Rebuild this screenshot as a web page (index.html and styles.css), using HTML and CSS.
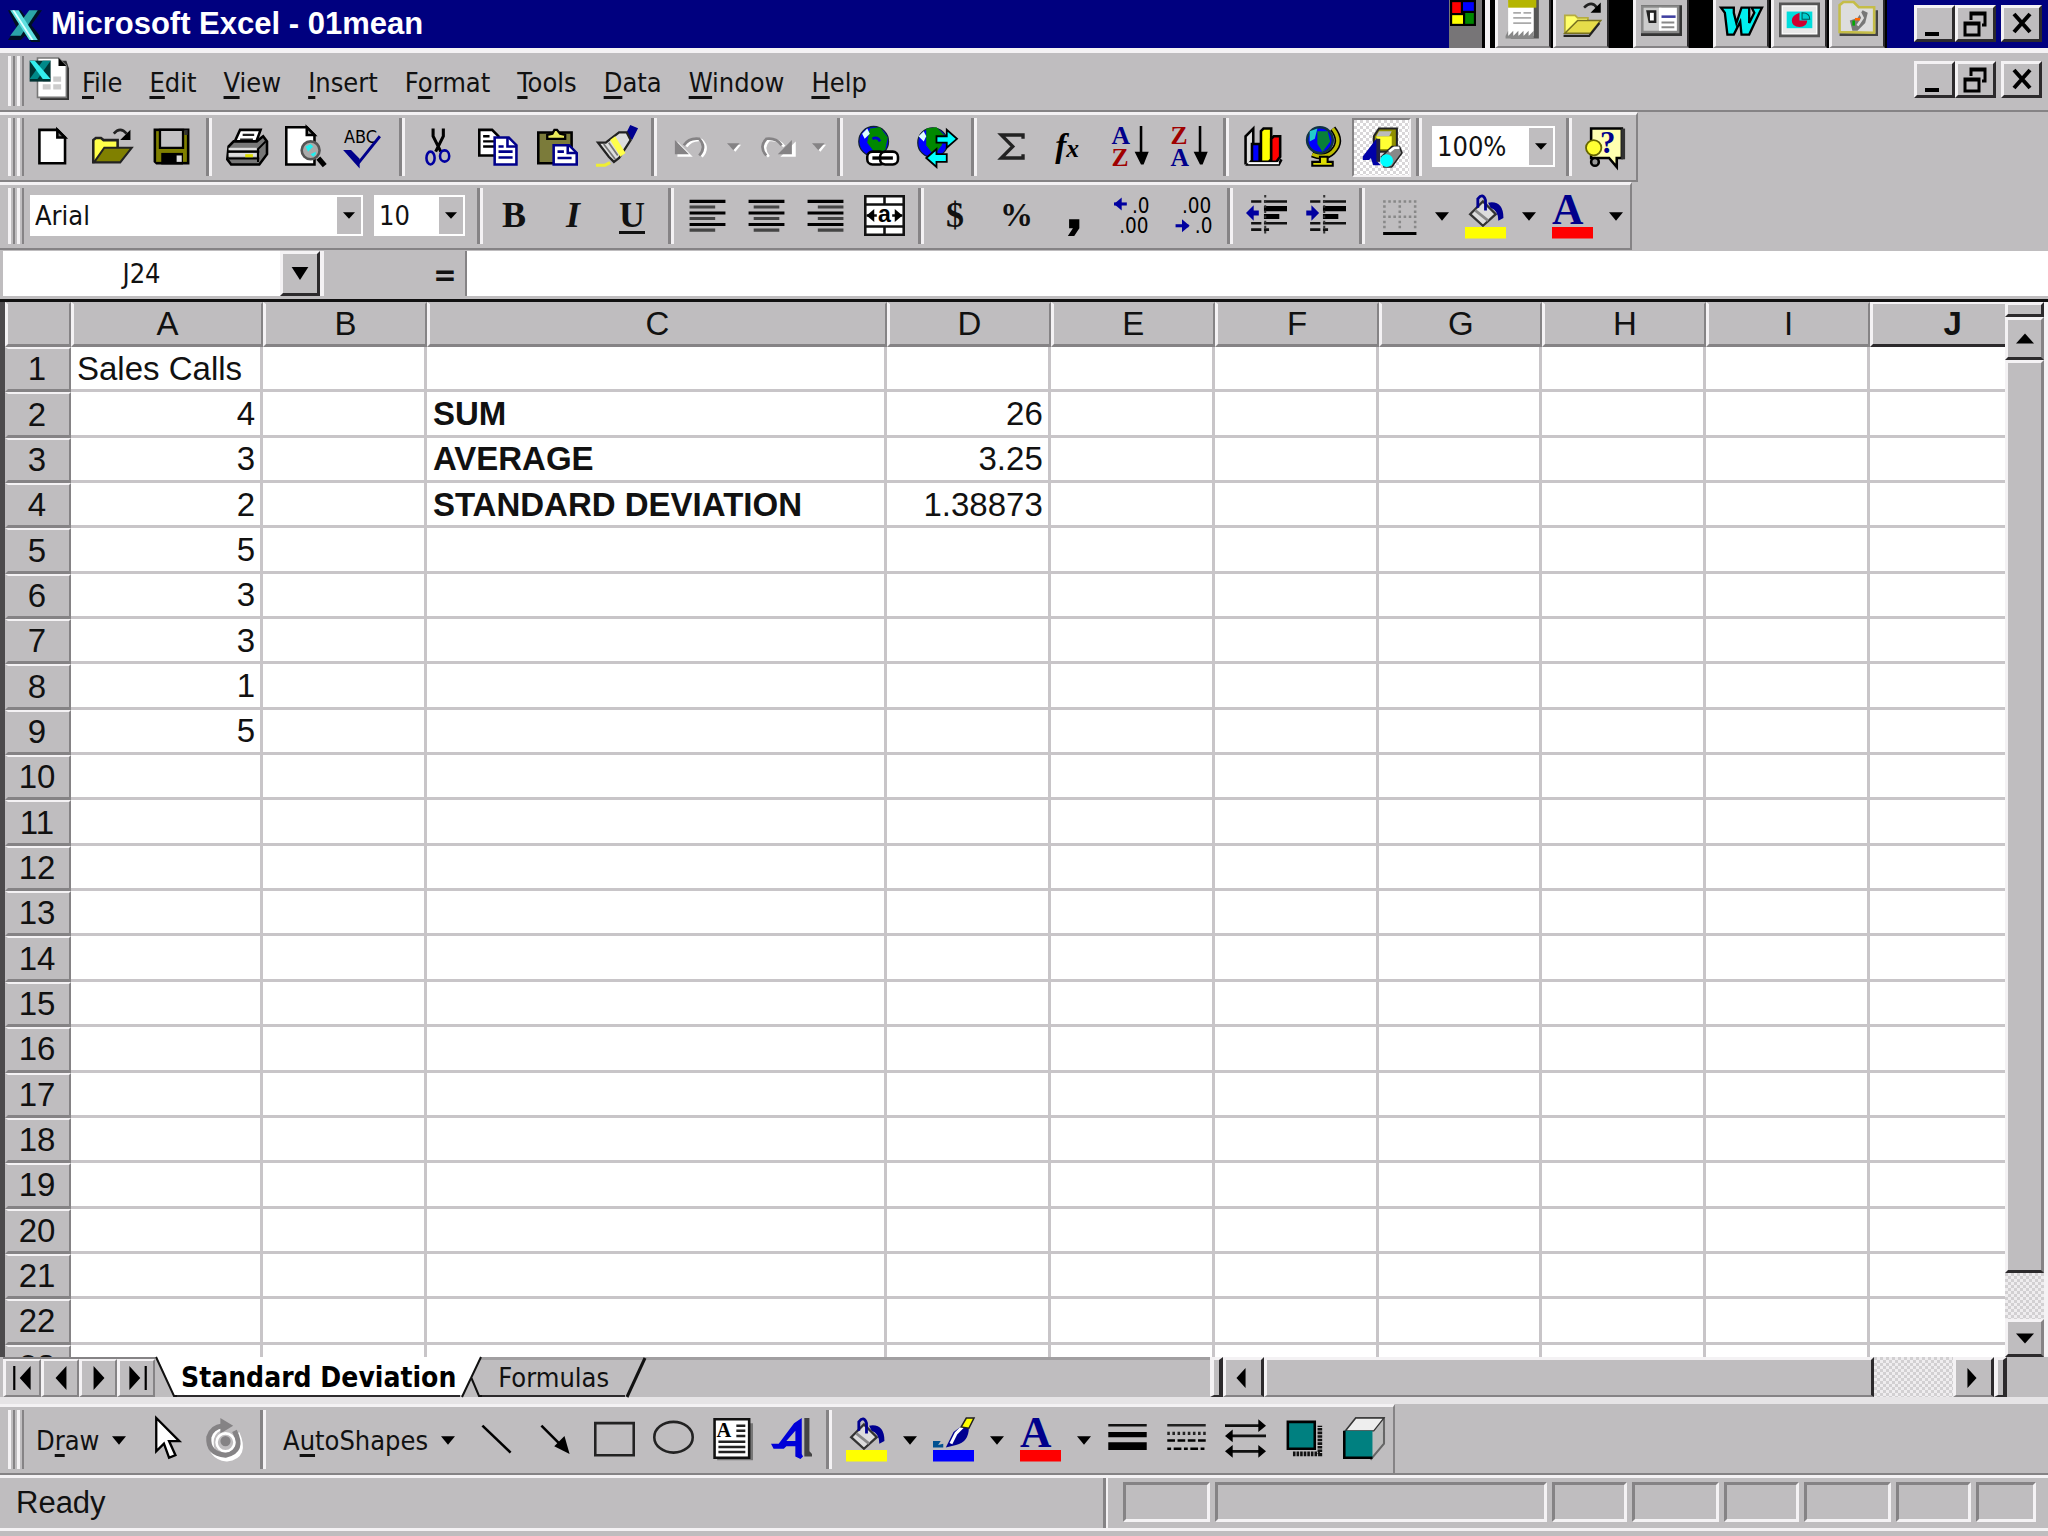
FILE: index.html
```html
<!DOCTYPE html>
<html lang="en">
    <head>
        <meta charset="utf-8">
        <title>Microsoft Excel - 01mean</title>
        <link rel="stylesheet" href="styles.css">
    </head>
    <body>
        <header class="titlebar">
            <svg class="app-icon" viewBox="0 0 16 16"><path d="M0 1h6l3 4 3-4h4l-5 7 4 5v3h-4l-3-3-2 2H0l4-6z" fill="#012"/><path d="M10 1h4L6 13H1z" fill="#2ba5a8"/><path d="M1 1h4l9 14h-4z" fill="#5fe0e0"/><path d="M2 1h1l9 14h-1z" fill="#e0ffff"/></svg>
            <h1 class="title">Microsoft Excel - 01mean</h1>
            <div class="shortcuts">
                <button class="flag" aria-label="Office"><svg viewBox="0 0 12 12"><path d="M0 0h12v12H0z"/><path d="M1 1h4v5H1z" fill="#f00"/><path d="M6 1h5v4H6z" fill="#00f"/><path d="M1 7h5v4H1z" fill="#ff0"/><path d="M7 6h4v5H7z" fill="#080"/></svg></button>
                <button class="shortcut" aria-label="New document"><svg class="icon" viewBox="0 0 16 16"><path d="M3 0h11v15H3z" fill="#555"/><path d="M2 1h10v13H2z" fill="#fff"/><path d="M2 0h11v3H2z" fill="#b5b500"/><path d="M4 5h3M8 5h3M4 7h7M4 9h7" stroke="#aaa" stroke-width=".7"/><path d="M1 14l1-2v2l2-2v2l2-2v2l2-2v2l2-2v2l2-2v3H1z" fill="#888"/></svg></button>
                <button class="shortcut" aria-label="Open document"><svg class="icon" viewBox="0 0 16 16"><path d="M1.500 13V6h4l1 1h4v3" fill="#ffff6b" stroke="#b5ac40" stroke-width=".7"/><path d="M1.500 13l5-5h9l-4 5z" fill="#e6dc4a" stroke="#777020" stroke-width=".6"/><path d="M1 14h10l4-5" fill="none" stroke="#222" stroke-width=".8"/><path d="M9 3q3-3 5 0" fill="none" stroke="#222"/><path d="M15.500 1v4h-4z"/></svg></button>
                <span class="gap"></span>
                <button class="shortcut" aria-label="Contact"><svg class="icon" viewBox="0 0 16 16"><path d="M0 2h16v12H0z" fill="#333"/><path d="M0 2h15v11H0z" fill="#888"/><path d="M1 3h7v9H1z" fill="#ccc"/><path d="M7 3h7v9H7z" fill="#fff"/><path d="M2 4h4v5H3z" fill="#222"/><path d="M3.500 5H5v3H3.500z" fill="#fff"/><path d="M8 6.500h5.500" stroke="#4040a0"/><path d="M8 8.800h5M8 10.600h5" stroke="#888" stroke-width=".8"/></svg></button>
                <span class="gap"></span>
                <button class="shortcut" aria-label="Word"><svg class="icon" viewBox="0 0 16 16"><path d="M0 3h5v2l1 4 2-6h3v6l2-4-1-2h4l-1 2-4 8.500H8l-.5-5-2.500 5H2.500L1.500 5z" fill="#0ee" stroke="#000" stroke-width=".9"/></svg></button>
                <button class="shortcut" aria-label="PowerPoint"><svg class="icon" viewBox="0 0 16 16"><path d="M.5 1.500h15v12.500H.5z" fill="#fff" stroke="#555"/><path d="M1.500 2.500h13v10.500h-13z" fill="#e8e8e8"/><path d="M3 4.500h10v6.500H3z" fill="#0dd"/><path d="M8 5v3h3q0 2.500-3 2.500T5 8q0-2 3-3" fill="#d00030"/><path d="M9 5q3 0 3 2.500H9z" fill="#0cc" stroke="#055" stroke-width=".4"/></svg></button>
                <button class="shortcut" aria-label="Explorer"><svg class="icon" viewBox="0 0 16 16"><path d="M1 13.500h14.500V4" fill="none" stroke="#444"/><path d="M1 12.500V2l1.500-1.200h4l2 2h6v10z" fill="#ddd" stroke="#c5bd48"/><path d="M10 4l2 1-1 4-3 3H6L5 8l3-1z" fill="#777"/><path d="M9 5l1 2-2 3" stroke="#ddd" fill="none"/><path d="M7 7h2v1H7z" fill="#f60"/><path d="M6 8h1v2H6z" fill="#0a0"/></svg></button>
            </div>
            <div class="window-buttons">
                <button class="win-btn" aria-label="Minimize"><svg viewBox="0 0 16 14"><path d="M3 11h7v2H3z"/></svg></button>
                <button class="win-btn" aria-label="Restore"><svg viewBox="0 0 16 14"><path d="M5.500 5V1.500h7v6H11M5 2h8M2.500 6.500h7v6h-7zM2 7h8" fill="none" stroke="#000" stroke-width="1.500"/></svg></button>
                <button class="win-btn close" aria-label="Close"><svg viewBox="0 0 16 14"><path d="M4 2l8 9M12 2l-8 9" stroke="#000" stroke-width="2"/></svg></button>
            </div>
        </header>

        <nav class="menubar">
            <span class="grip"></span>
            <svg class="doc-icon" viewBox="0 0 16 16"><path d="M5 1h10l1 3v12H5z" fill="#333"/><path d="M4 0h8l3 3v12H4z" fill="#fff" stroke="#777" stroke-width=".6"/><path d="M12 0v3h3z"/><path d="M6 7h3v2H6zM10 7h3v2h-3zM6 10h3v2H6zM10 10h3v2h-3z" fill="#ccc"/><path d="M1 1h8v8H1z" fill="#033"/><path d="M6 1h3L4 8H1z" fill="#088"/><path d="M1 1h2l6 7H6z" fill="#3ee"/></svg>
            <button class="menu"><u>F</u>ile</button>
            <button class="menu"><u>E</u>dit</button>
            <button class="menu"><u>V</u>iew</button>
            <button class="menu"><u>I</u>nsert</button>
            <button class="menu">F<u>o</u>rmat</button>
            <button class="menu"><u>T</u>ools</button>
            <button class="menu"><u>D</u>ata</button>
            <button class="menu"><u>W</u>indow</button>
            <button class="menu"><u>H</u>elp</button>
            <div class="window-buttons">
                <button class="win-btn" aria-label="Minimize workbook"><svg viewBox="0 0 16 14"><path d="M3 11h7v2H3z"/></svg></button>
                <button class="win-btn" aria-label="Restore workbook"><svg viewBox="0 0 16 14"><path d="M5.500 5V1.500h7v6H11M5 2h8M2.500 6.500h7v6h-7zM2 7h8" fill="none" stroke="#000" stroke-width="1.500"/></svg></button>
                <button class="win-btn close" aria-label="Close workbook"><svg viewBox="0 0 16 14"><path d="M4 2l8 9M12 2l-8 9" stroke="#000" stroke-width="2"/></svg></button>
            </div>
        </nav>

        <!-- Standard toolbar -->
        <div class="toolbar" role="toolbar" aria-label="Standard">
            <span class="grip"></span>
            <button class="tool" aria-label="New"><svg class="icon" viewBox="0 0 16 16"><path d="M2.500 1.500h7l3 3v10h-10z" fill="#fff" stroke="#000"/><path d="M9.500 1.500v3h3z" fill="#777" stroke="#000"/></svg></button>
            <button class="tool" aria-label="Open"><svg class="icon" viewBox="0 0 16 16"><path d="M.5 14.500V5.500l1-.8h2l1 .8h5.500v3" fill="#ffff4a" stroke="#222"/><path d="M.8 14.200l4-5.700h10.700l-4.500 5.700z" fill="#808000" stroke="#222" stroke-width=".8"/><path d="M8.500 3q2.500-3 5 0" fill="none" stroke="#222"/><path d="M15 1.500v4h-4z"/></svg></button>
            <button class="tool" aria-label="Save"><svg class="icon" viewBox="0 0 16 16"><path d="M1 1h14v14H2l-1-1z"/><path d="M2 2h12v12H2z" fill="#808000"/><path d="M3.500 1.500h9v7h-9z" fill="#c4c2c4" stroke="#000" stroke-width=".9"/><path d="M4 10.500h8.500V15H4z"/><path d="M10 11.500h2V14h-2z" fill="#ddd"/><path d="M13 1.500h1.300v2H13z" fill="#333"/></svg></button>
            <span class="sep"></span>
            <button class="tool" aria-label="Print"><svg class="icon" viewBox="0 0 16 16"><path d="M5.500 1.500h8L11.500 7H3z" fill="#fff" stroke="#000"/><path d="M6.500 3.500h4.500M5.500 5.300h5" stroke="#222" stroke-width=".9"/><path d="M1 8l2-2h9l2.500-2L16 6v5l-3 4H2L.5 13z" fill="#777" stroke="#000"/><path d="M1 8.500h11v1H1z" fill="#ddd"/><path d="M1 10.500h11v1.500H1z" fill="#ddd"/><path d="M1 10h12M1 12.700h12M12.500 14V9l3-3" stroke="#000" stroke-width=".8" fill="none"/><path d="M7.500 11h3v1.200h-3z" fill="#dd0"/></svg></button>
            <button class="tool" aria-label="Print Preview"><svg class="icon" viewBox="0 0 16 16"><path d="M.5.500h8l3 3v11.500H.5z" fill="#fff" stroke="#000"/><path d="M8.500.500v3h3z" fill="#999" stroke="#000"/><circle cx="10" cy="9.500" r="3.500" fill="#aaa" stroke="#555"/><path d="M8 8l2-1 1 1-2 2zM10 11l2-1v1l-1 1z" fill="#2ee"/><path d="M13 12.500l2.500 3" stroke="#000" stroke-width="2"/></svg></button>
            <button class="tool" aria-label="Spelling"><svg class="icon" viewBox="0 0 16 16"><text x="0" y="6.500" class="svg-mono">ABC</text><path d="M3 11l3 3L14 4" fill="none" stroke="#00008b" stroke-width="1.100"/><path d="M1 10h1.500L5.500 13v2z" fill="#00008b" stroke="#00008b" stroke-width="1.200"/></svg></button>
            <span class="sep"></span>
            <button class="tool" aria-label="Cut"><svg class="icon" viewBox="0 0 16 16"><path d="M5.500 1v3L8.500 10M9.500 1v3L6.500 10" fill="none" stroke="#000" stroke-width="1.200"/><ellipse cx="4.500" cy="12.500" rx="1.600" ry="2.500" fill="none" stroke="#0000a0"/><ellipse cx="10" cy="11.700" rx="1.800" ry="2.200" fill="none" stroke="#0000a0"/></svg></button>
            <button class="tool" aria-label="Copy"><svg class="icon" viewBox="0 0 16 16"><path d="M.5 1.500h5l2.500 2.500v7.500H.5z" fill="#fff" stroke="#000"/><path d="M2 4h2.500M2 6h4.500M2 8h4.500" stroke="#000" stroke-width=".9"/><path d="M6.500 4.500h5.500l3 3v7.500h-8.500z" fill="#fff" stroke="#00008b"/><path d="M11.500 4.500v3.500h3.500M8 8h2M8 10h5.500M8 12.300h5.500" fill="none" stroke="#00008b"/></svg></button>
            <button class="tool" aria-label="Paste"><svg class="icon" viewBox="0 0 16 16"><path d="M.5 2.500h13v12H.5z" fill="#7b7b3a" stroke="#000"/><path d="M4 5V3.500l2-.5.800-1.500h1L9 3l2 .5V5z" fill="#e8e85a" stroke="#000" stroke-width=".9"/><path d="M6.500 7.500h6l3 3v4.500h-9z" fill="#fff" stroke="#00008b"/><path d="M12 7.500v3h3.500M8 10h2.500M8 12.500h5.500" fill="none" stroke="#00008b"/></svg></button>
            <button class="tool" aria-label="Format Painter"><svg class="icon" viewBox="0 0 16 16"><path d="M11.500 4l2-4 2.500 1-2 4z" fill="#000090" stroke="#000090" stroke-width=".6"/><path d="M.8 6.500h3L9 2.500h3l1.500 3-4.500 7-2 1.500-2-2z" fill="#ddd" stroke="#222" stroke-width=".9"/><path d="M5.500 5.500l2-1.500 4 6.500-2 1.500z" fill="#ffff4a"/><path d="M3 7l4.500 6M5 6.500l3.500 5" stroke="#777" stroke-width=".7"/><path d="M0 15.300h3.500l2-1" fill="none" stroke="#ee3" stroke-width="1.200"/></svg></button>
            <span class="sep"></span>
            <button class="tool" aria-label="Undo" disabled><svg class="icon" viewBox="0 0 16 16"><g fill="none" stroke="#fff"><path d="M6 8q2-3 6-2.500 3 3 0 6.500"/><path d="M2.500 6v6h6z" fill="#fff" stroke="none"/></g><g fill="none" stroke="#858385"><path d="M5 7.500q2-3 6-2.500 3 3 0 6.500"/><path d="M1.500 5.500v5.500h5.500z" fill="#858385" stroke="none"/></g></svg></button>
            <button class="drop" aria-label="Undo list" disabled><svg viewBox="0 0 10 6"><path d="M1 1h9L6 6z" fill="#fff"/><path d="M0 0h9L4.500 5z" fill="#858385"/></svg></button>
            <button class="tool" aria-label="Redo" disabled><svg class="icon" viewBox="0 0 16 16"><g fill="none" stroke="#fff"><path d="M11 8q-2-3-6-2.500-3 3 0 6.500"/><path d="M15.500 6v6h-6z" fill="#fff" stroke="none"/></g><g fill="none" stroke="#858385"><path d="M10 7.500q-2-3-6-2.500-3 3 0 6.500"/><path d="M14 5.500v5.500H8.500z" fill="#858385" stroke="none"/></g></svg></button>
            <button class="drop" aria-label="Redo list" disabled><svg viewBox="0 0 10 6"><path d="M1 1h9L6 6z" fill="#fff"/><path d="M0 0h9L4.500 5z" fill="#858385"/></svg></button>
            <span class="sep"></span>
            <button class="tool" aria-label="Insert Hyperlink"><svg class="icon" viewBox="0 0 16 16"><circle cx="6.500" cy="6" r="5.800" fill="#00f" stroke="#123" stroke-width=".5"/><path d="M5 1l4-.500 3 4-1 5-4 1-3-4z" fill="#080"/><path d="M6 5q2-1 3 1" stroke="#00c" fill="none"/><path d="M2 3l2-2 1 2-2 2z" fill="#dff"/><rect x="4" y="10" width="7" height="5" rx="2" fill="#fff" stroke="#000"/><rect x="9" y="10" width="7" height="5" rx="2" fill="#fff" stroke="#000"/><path d="M6 12.500h8" stroke="#000" stroke-width="1.300"/></svg></button>
            <button class="tool" aria-label="Web Toolbar"><svg class="icon" viewBox="0 0 16 16"><circle cx="6.500" cy="6.500" r="5.800" fill="#00f" stroke="#123" stroke-width=".5"/><path d="M4 1l4-.500 3 3-1 4-3 4-3-4z" fill="#080"/><path d="M1 4l2-2 1 2-1 2z" fill="#dff"/><path d="M8 4h4V1.500L16 5l-4 3.500V6.500H8z" fill="#0ff" stroke="#000" stroke-width=".7"/><path d="M12 11H8V9l-4 3.500L8 16v-2h4z" fill="#0ff" stroke="#000" stroke-width=".7"/></svg></button>
            <span class="sep"></span>
            <button class="tool" aria-label="AutoSum"><svg class="icon" viewBox="0 0 16 16"><path d="M12.500 5V3.500H4L8.500 8 4 12.500h8.500V11" fill="none" stroke="#222" stroke-width="1.300"/></svg></button>
            <button class="tool" aria-label="Paste Function"><svg class="icon" viewBox="0 0 16 16"><text x="2" y="12" class="svg-serif" font-size="13" font-style="italic">f<tspan font-size="10">x</tspan></text></svg></button>
            <button class="tool" aria-label="Sort Ascending"><svg class="icon" viewBox="0 0 16 16"><text x="1" y="7" class="svg-serif" font-size="10" fill="#00008b">A</text><text x="1" y="15.500" class="svg-serif" font-size="10" fill="#a00000">Z</text><path d="M12.500 0v12" stroke="#000"/><path d="M10 10h5.500l-2 5h-1z"/></svg></button>
            <button class="tool" aria-label="Sort Descending"><svg class="icon" viewBox="0 0 16 16"><text x="1" y="7" class="svg-serif" font-size="10" fill="#a00000">Z</text><text x="1" y="15.500" class="svg-serif" font-size="10" fill="#00008b">A</text><path d="M12.500 0v12" stroke="#000"/><path d="M10 10h5.500l-2 5h-1z"/></svg></button>
            <span class="sep"></span>
            <button class="tool" aria-label="Chart Wizard"><svg class="icon" viewBox="0 0 16 16"><path d="M1 15V4l3-3v12l-2 2h12l1-2" fill="#ddd" stroke="#000"/><path d="M3.500 7h3v7h-3z" fill="#00f" stroke="#000"/><path d="M7 2l1-1h3v12l-1 1H7z" fill="#ff0" stroke="#000"/><path d="M11 5l1-1h2.500v8L13 14h-2z" fill="#f00" stroke="#000"/><path d="M2 14.500h12" stroke="#fff" stroke-width=".8"/></svg></button>
            <button class="tool" aria-label="Map"><svg class="icon" viewBox="0 0 16 16"><path d="M12 1q4 5 0 9-3 3-8 1" fill="none" stroke="#000" stroke-width="2.500"/><path d="M12 1q4 5 0 9-3 3-8 1" fill="none" stroke="#bb0" stroke-width="1.300"/><circle cx="7" cy="5.500" r="5" fill="#00f" stroke="#134"/><path d="M6 2l4 0 1 4-3 4-2-3z" fill="#088038"/><path d="M3 2l3-1-1 4-2 1z" fill="#2cc"/><path d="M7 12h3v2h2v1.500H4V14h3z" fill="#dd0" stroke="#000" stroke-width=".8"/></svg></button>
            <button class="tool pressed" aria-label="Drawing" aria-pressed="true"><svg class="icon" viewBox="0 0 16 16"><path d="M5 4l2-3h7v9H5z" fill="#8f8f00" stroke="#222" stroke-width=".8"/><path d="M6 4h6v5H6z" fill="#ff3"/><path d="M7 2h5l-1 2H6z" fill="#bbb"/><path d="M1 12l5-6.500V14l1 1H5l-1-3-1 1H1z" fill="#0000a8" stroke="#0000a8" stroke-width=".6"/><path d="M6 5h1.500v9H6z" fill="#224"/><path d="M8 12l4-4h3l1 2.500-4 5.500H9z" fill="#888" stroke="#222" stroke-width=".6"/><path d="M11 10l2-1.500h2" stroke="#fff" fill="none"/><circle cx="10" cy="13.500" r="2.500" fill="#0ff"/></svg></button>
            <span class="sep"></span>
            <label class="combo zoom"><select aria-label="Zoom"><option>100%</option></select><svg viewBox="0 0 9 5"><path d="M0 0h9L4.500 5z"/></svg></label>
            <span class="sep"></span>
            <button class="tool" aria-label="Office Assistant"><svg class="icon" viewBox="0 0 16 16"><path d="M2 1h12v11.500h-2V16l-3-3.500H2z" fill="#ffffb0" stroke="#000"/><path d="M14.500 1v12" stroke="#333" stroke-width="1.500"/><text x="5.500" y="10.500" class="svg-serif" font-size="12" fill="#00008b">?</text><circle cx="3" cy="8.500" r="3" fill="#ff3" stroke="#660" stroke-width=".7"/><circle cx="3.500" cy="14" r="1.500" fill="#999" stroke="#000"/></svg></button>
        </div>

        <!-- Formatting toolbar -->
        <div class="toolbar formatting" role="toolbar" aria-label="Formatting">
            <span class="grip"></span>
            <label class="combo font"><select aria-label="Font"><option>Arial</option></select><svg viewBox="0 0 9 5"><path d="M0 0h9L4.500 5z"/></svg></label>
            <label class="combo size"><select aria-label="Font Size"><option>10</option></select><svg viewBox="0 0 9 5"><path d="M0 0h9L4.500 5z"/></svg></label>
            <span class="sep"></span>
            <button class="tool letter">B</button>
            <button class="tool letter"><i>I</i></button>
            <button class="tool letter"><u>U</u></button>
            <span class="sep"></span>
            <button class="tool" aria-label="Align Left"><svg class="icon" viewBox="0 0 16 16"><path d="M1 2.500h14M1 7h14M1 11.500h14" stroke="#000" stroke-width="1.200"/><path d="M1 4.700h10M1 9.200h10M1 13.700h10" stroke="#444" stroke-width="1.200"/></svg></button>
            <button class="tool" aria-label="Center"><svg class="icon" viewBox="0 0 16 16"><path d="M1 2.500h14M1 7h14M1 11.500h14" stroke="#000" stroke-width="1.200"/><path d="M3 4.700h10M3 9.200h10M3 13.700h10" stroke="#444" stroke-width="1.200"/></svg></button>
            <button class="tool" aria-label="Align Right"><svg class="icon" viewBox="0 0 16 16"><path d="M1 2.500h14M1 7h14M1 11.500h14" stroke="#000" stroke-width="1.200"/><path d="M5 4.700h10M5 9.200h10M5 13.700h10" stroke="#444" stroke-width="1.200"/></svg></button>
            <button class="tool" aria-label="Merge and Center"><svg class="icon" viewBox="0 0 16 16"><path d="M.5.500h15v15H.5z" fill="#fff" stroke="#111"/><path d="M0 3.700h16M0 12.300h16M8 0v4M8 12v4M1 8h4M11 8h4" stroke="#111"/><path d="M1 8l3-2.500v5zM15 8l-3-2.500v5z"/><text x="5.500" y="10.500" class="svg-sans" font-size="9">a</text></svg></button>
            <span class="sep"></span>
            <button class="tool letter">$</button>
            <button class="tool letter percent">%</button>
            <button class="tool" aria-label="Comma Style"><svg class="icon" viewBox="0 0 16 16"><path d="M5.500 9.500h4V13l-2 3H5l2-3H5.500z"/></svg></button>
            <button class="tool" aria-label="Increase Decimal"><svg class="icon" viewBox="0 0 16 16"><path d="M0 3.500h5" stroke="#0000a0" stroke-width="1.200"/><path d="M0 3.500L3 1v5z" fill="#0000a0"/><text x="7" y="7" class="svg-digits">.0</text><text x="2" y="15" class="svg-digits">.00</text></svg></button>
            <button class="tool" aria-label="Decrease Decimal"><svg class="icon" viewBox="0 0 16 16"><path d="M1 12h5" stroke="#0000a0" stroke-width="1.200"/><path d="M6.500 12l-3-2.500v5z" fill="#0000a0"/><text x="3.500" y="7" class="svg-digits">.00</text><text x="8.500" y="15" class="svg-digits">.0</text></svg></button>
            <span class="sep"></span>
            <button class="tool" aria-label="Decrease Indent"><svg class="icon" viewBox="0 0 16 16"><path d="M2 2.500h4M7 2.500h9M2 11h4M7 11h9M2 13.500h4M7 13.500h2" stroke="#111"/><path d="M7 5.300h9M7 8.400h6" stroke="#000" stroke-width="2"/><path d="M7.500 0v16" stroke="#333" stroke-width=".8" stroke-dasharray="1 1"/><path d="M0 7l3-3v2h2v2H3v2z" fill="#0000a0"/></svg></button>
            <button class="tool" aria-label="Increase Indent"><svg class="icon" viewBox="0 0 16 16"><path d="M2 2.500h4M7 2.500h9M2 11h4M7 11h9M2 13.500h4M7 13.500h2" stroke="#111"/><path d="M7 5.300h9M7 8.400h6" stroke="#000" stroke-width="2"/><path d="M7.500 0v16" stroke="#333" stroke-width=".8" stroke-dasharray="1 1"/><path d="M5.500 7l-3-3v2h-2v2h2v2z" fill="#0000a0"/></svg></button>
            <span class="sep"></span>
            <button class="tool" aria-label="Borders"><svg class="icon" viewBox="0 0 16 16"><path d="M2 2.500h13M2 8.500h13M2.500 2v12M8.500 2v12M14.500 2v12" stroke="#888" stroke-dasharray="1 1"/><path d="M2 15h13" stroke="#000" stroke-width="1.200"/></svg></button>
            <button class="drop wide" aria-label="Border styles"><svg viewBox="0 0 10 6"><path d="M0 0h10L5 6z"/></svg></button>
            <button class="tool" aria-label="Fill Color"><svg class="icon" viewBox="0 0 16 16"><path d="M2 7.500l5-5 5 5-5 4.500z" fill="#ddd" stroke="#333" stroke-width=".9"/><path d="M4 6l5 4" stroke="#888"/><path d="M5 5V1.500Q7-1 8 2v4" fill="none" stroke="#000090" stroke-width="1.100"/><path d="M9 3q6-1 6 6l-2 1q0-4-3-5z" fill="#000090"/><path d="M0 12.500h16V17H0z" fill="#ff0"/></svg></button>
            <button class="drop wide" aria-label="Fill colors"><svg viewBox="0 0 10 6"><path d="M0 0h10L5 6z"/></svg></button>
            <button class="tool" aria-label="Font Color"><svg class="icon" viewBox="0 0 16 16"><text x="0" y="11.500" class="svg-serif" font-size="17" fill="#00008b">A</text><path d="M0 12.500h16V17H0z" fill="#f00"/></svg></button>
            <button class="drop wide" aria-label="Font colors"><svg viewBox="0 0 10 6"><path d="M0 0h10L5 6z"/></svg></button>
        </div>

        <div class="formula-bar">
            <input class="name-box" aria-label="Name Box" value="J24">
            <button class="name-drop" aria-label="Names"><svg viewBox="0 0 9 7"><path d="M0 0h9L4.500 7z"/></svg></button>
            <div class="formula-tools"><button class="equals">=</button></div>
            <input class="formula" aria-label="Formula">
        </div>

        <main class="workbook">
            <div class="sheet">
                <table>
                    <colgroup><col class="col-head"><col class="col-a"><col><col class="col-c"><col><col><col><col><col><col><col></colgroup>
                    <thead>
                        <tr><th></th><th>A</th><th>B</th><th>C</th><th>D</th><th>E</th><th>F</th><th>G</th><th>H</th><th>I</th><th class="current">J</th></tr>
                    </thead>
                    <tbody>
                        <tr><th>1</th><td class="text">Sales Calls</td><td></td><td></td><td></td><td></td><td></td><td></td><td></td><td></td><td></td></tr>
                        <tr><th>2</th><td>4</td><td></td><td class="label">SUM</td><td>26</td><td></td><td></td><td></td><td></td><td></td><td></td></tr>
                        <tr><th>3</th><td>3</td><td></td><td class="label">AVERAGE</td><td>3.25</td><td></td><td></td><td></td><td></td><td></td><td></td></tr>
                        <tr><th>4</th><td>2</td><td></td><td class="label">STANDARD DEVIATION</td><td>1.38873</td><td></td><td></td><td></td><td></td><td></td><td></td></tr>
                        <tr><th>5</th><td>5</td><td></td><td></td><td></td><td></td><td></td><td></td><td></td><td></td><td></td></tr>
                        <tr><th>6</th><td>3</td><td></td><td></td><td></td><td></td><td></td><td></td><td></td><td></td><td></td></tr>
                        <tr><th>7</th><td>3</td><td></td><td></td><td></td><td></td><td></td><td></td><td></td><td></td><td></td></tr>
                        <tr><th>8</th><td>1</td><td></td><td></td><td></td><td></td><td></td><td></td><td></td><td></td><td></td></tr>
                        <tr><th>9</th><td>5</td><td></td><td></td><td></td><td></td><td></td><td></td><td></td><td></td><td></td></tr>
                        <tr><th>10</th><td></td><td></td><td></td><td></td><td></td><td></td><td></td><td></td><td></td><td></td></tr>
                        <tr><th>11</th><td></td><td></td><td></td><td></td><td></td><td></td><td></td><td></td><td></td><td></td></tr>
                        <tr><th>12</th><td></td><td></td><td></td><td></td><td></td><td></td><td></td><td></td><td></td><td></td></tr>
                        <tr><th>13</th><td></td><td></td><td></td><td></td><td></td><td></td><td></td><td></td><td></td><td></td></tr>
                        <tr><th>14</th><td></td><td></td><td></td><td></td><td></td><td></td><td></td><td></td><td></td><td></td></tr>
                        <tr><th>15</th><td></td><td></td><td></td><td></td><td></td><td></td><td></td><td></td><td></td><td></td></tr>
                        <tr><th>16</th><td></td><td></td><td></td><td></td><td></td><td></td><td></td><td></td><td></td><td></td></tr>
                        <tr><th>17</th><td></td><td></td><td></td><td></td><td></td><td></td><td></td><td></td><td></td><td></td></tr>
                        <tr><th>18</th><td></td><td></td><td></td><td></td><td></td><td></td><td></td><td></td><td></td><td></td></tr>
                        <tr><th>19</th><td></td><td></td><td></td><td></td><td></td><td></td><td></td><td></td><td></td><td></td></tr>
                        <tr><th>20</th><td></td><td></td><td></td><td></td><td></td><td></td><td></td><td></td><td></td><td></td></tr>
                        <tr><th>21</th><td></td><td></td><td></td><td></td><td></td><td></td><td></td><td></td><td></td><td></td></tr>
                        <tr><th>22</th><td></td><td></td><td></td><td></td><td></td><td></td><td></td><td></td><td></td><td></td></tr>
                        <tr><th>23</th><td></td><td></td><td></td><td></td><td></td><td></td><td></td><td></td><td></td><td></td></tr>
                    </tbody>
                </table>
            </div>
            <div class="vscroll">
                <span class="split"></span>
                <button aria-label="Scroll up"><svg viewBox="0 0 9 5"><path d="M0 5h9L4.500 0z"/></svg></button>
                <span class="thumb"></span>
                <span class="track"></span>
                <button aria-label="Scroll down"><svg viewBox="0 0 9 5"><path d="M0 0h9L4.500 5z"/></svg></button>
            </div>
        </main>

        <div class="tabbar">
            <div class="tab-nav">
                <button aria-label="First sheet"><svg viewBox="0 0 9 11"><path d="M0 0h1v11H0zM8 0v11L3 5.500z"/></svg></button>
                <button aria-label="Previous sheet"><svg viewBox="0 0 9 11"><path d="M7 0v11L2 5.500z"/></svg></button>
                <button aria-label="Next sheet"><svg viewBox="0 0 9 11"><path d="M2 0v11l5-5.500z"/></svg></button>
                <button aria-label="Last sheet"><svg viewBox="0 0 9 11"><path d="M8 0h1v11H8zM1 0v11l5-5.500z"/></svg></button>
            </div>
            <svg class="edge" viewBox="0 0 22 40"><path d="M2 0h20v38H19z" fill="#fff"/><path d="M1 0l18 39h3" fill="none" stroke="#111" stroke-width="2"/></svg>
            <button class="tab active">Standard Deviation</button>
            <svg class="edge" viewBox="0 0 22 40"><path d="M0 0h21L3 38H0z" fill="#fff"/><path d="M20 1.500h2" stroke="#a19fa1" stroke-width="3"/><path d="M21 0L2 40M11 20l8 19h3" fill="none" stroke="#111" stroke-width="2"/></svg>
            <button class="tab">Formulas</button>
            <svg class="edge" viewBox="0 0 22 40"><path d="M0 1.500h22" stroke="#a19fa1" stroke-width="3"/><path d="M20 1L2 40" stroke="#111" stroke-width="3"/></svg>
            <span class="tab-rest"></span>
            <div class="hscroll">
                <span class="split"></span>
                <button aria-label="Scroll left"><svg viewBox="0 0 9 11"><path d="M7 0v11L2 5.500z"/></svg></button>
                <span class="thumb"></span>
                <span class="track"></span>
                <button aria-label="Scroll right"><svg viewBox="0 0 9 11"><path d="M2 0v11l5-5.500z"/></svg></button>
                <span class="split"></span>
            </div>
        </div>

        <!-- Drawing toolbar -->
        <div class="draw-dock">
            <div class="toolbar drawing" role="toolbar" aria-label="Drawing">
                <span class="grip"></span>
                <button class="text-tool draw">D<u>r</u>aw <svg viewBox="0 0 10 6"><path d="M0 0h10L5 6z"/></svg></button>
                <button class="tool" aria-label="Select Objects"><svg class="icon" viewBox="0 0 16 16"><path d="M4 0v13l3-3 2 5.500 2.500-1L9 9h4z" fill="#fff" stroke="#000" stroke-width=".9"/></svg></button>
                <button class="tool" aria-label="Free Rotate" disabled><svg class="icon" viewBox="0 0 16 16"><g fill="none" stroke-width="2"><path d="M12.500 6q4 9-4 10-7-1-6-8 1-4 5-4.500" stroke="#fff"/><path d="M11.500 5q4 8-3.500 9.500-7-.500-6.500-7 1-4 5.500-4.500" stroke="#858385"/></g><path d="M6 0l5 3-5 3z" fill="#858385"/><circle cx="8" cy="9.500" r="3.500" fill="none" stroke="#fff"/><circle cx="8" cy="9" r="2" fill="#858385"/></svg></button>
                <span class="sep"></span>
                <button class="text-tool autoshapes">A<u>u</u>toShapes <svg viewBox="0 0 10 6"><path d="M0 0h10L5 6z"/></svg></button>
                <button class="tool" aria-label="Line"><svg class="icon" viewBox="0 0 16 16"><path d="M2.500 3l11 10.500" stroke="#000"/></svg></button>
                <button class="tool" aria-label="Arrow"><svg class="icon" viewBox="0 0 16 16"><path d="M2.500 3l8 8" stroke="#000"/><path d="M13.500 14l-6-3 4-4z"/></svg></button>
                <button class="tool" aria-label="Rectangle"><svg class="icon" viewBox="0 0 16 16"><path d="M.5 2h15v12.500H.5z" fill="none" stroke="#222"/></svg></button>
                <button class="tool" aria-label="Oval"><svg class="icon" viewBox="0 0 16 16"><ellipse cx="8" cy="7.500" rx="7.500" ry="6" fill="none" stroke="#222"/></svg></button>
                <button class="tool" aria-label="Text Box"><svg class="icon" viewBox="0 0 16 16"><path d="M2 2h14v14.500H2z" fill="#777"/><path d="M1 .5h13.500v15H1z" fill="#fff" stroke="#111"/><text x="1.800" y="7.500" class="svg-serif" font-size="8">A</text><path d="M9.500 3H13M9.500 5H13M9.500 7H13M2.500 9.300H13M2.500 11.300H13M2.500 13.300H13" stroke="#222"/></svg></button>
                <button class="tool" aria-label="WordArt"><svg class="icon" viewBox="0 0 16 16"><path d="M13 0h2v13l1 1v1h-3z" fill="#444"/><path d="M9 2l3-2v14l.5 1-1 1-2-1V11H6l-1 1H1L0 10h3z" fill="#0000d8"/><path d="M9.500 5v4H6z" fill="#bfbdbf"/></svg></button>
                <span class="sep"></span>
                <button class="tool" aria-label="Shape Fill"><svg class="icon" viewBox="0 0 16 16"><path d="M2 7.500l5-5 5 5-5 4.500z" fill="#ddd" stroke="#333" stroke-width=".9"/><path d="M4 6l5 4" stroke="#888"/><path d="M5 5V1.500Q7-1 8 2v4" fill="none" stroke="#000090" stroke-width="1.100"/><path d="M9 3q6-1 6 6l-2 1q0-4-3-5z" fill="#000090"/><path d="M0 12.500h16V17H0z" fill="#ff0"/></svg></button>
                <button class="drop wide" aria-label="Shape fill colors"><svg viewBox="0 0 10 6"><path d="M0 0h10L5 6z"/></svg></button>
                <button class="tool" aria-label="Line Color"><svg class="icon" viewBox="0 0 16 16"><path d="M0 9h3l-1 1.500 2-.5v1.500H0z" fill="#005090"/><path d="M5 11.500l3-6 4-3 2 1q0 6-5 7z" fill="#000090"/><path d="M7 10l2-4 3-3" stroke="#fff" fill="none" stroke-width="1.200"/><path d="M11 3.500l2-3.500h3l-2 4z" fill="#ff0" stroke="#222" stroke-width=".6"/><path d="M0 12.500h16V17H0z" fill="#00f"/></svg></button>
                <button class="drop wide" aria-label="Line colors"><svg viewBox="0 0 10 6"><path d="M0 0h10L5 6z"/></svg></button>
                <button class="tool" aria-label="Text Color"><svg class="icon" viewBox="0 0 16 16"><text x="0" y="11.500" class="svg-serif" font-size="17" fill="#00008b">A</text><path d="M0 12.500h16V17H0z" fill="#f00"/></svg></button>
                <button class="drop wide" aria-label="Text colors"><svg viewBox="0 0 10 6"><path d="M0 0h10L5 6z"/></svg></button>
                <button class="tool" aria-label="Line Style"><svg class="icon" viewBox="0 0 16 16"><path d="M.5 2.800h15" stroke="#111"/><path d="M.5 6.500h15" stroke="#000" stroke-width="2"/><path d="M.5 11h15" stroke="#000" stroke-width="3"/></svg></button>
                <button class="tool" aria-label="Dash Style"><svg class="icon" viewBox="0 0 16 16"><path d="M.5 2.800h15" stroke="#222"/><path d="M.5 6h15" stroke="#222" stroke-width="1.200" stroke-dasharray="1 1"/><path d="M.5 8.800h15" stroke="#000" stroke-dasharray="3 1"/><path d="M.5 12h15" stroke="#000" stroke-dasharray="1.500 1 3 1"/></svg></button>
                <button class="tool" aria-label="Arrow Style"><svg class="icon" viewBox="0 0 16 16"><path d="M0 3h14M2 7h14M1 13h14" stroke="#111" stroke-width="1.100"/><path d="M16 3l-3-2.500v5zM0 7l3-2.500v5zM0 13l3-2.500v5zM16 13l-3-2.500v5z"/></svg></button>
                <button class="tool" aria-label="Shadow"><svg class="icon" viewBox="0 0 16 16"><path d="M3.500 14h10.500V3" fill="none" stroke="#111" stroke-width="1.800" stroke-dasharray="1 .4"/><path d="M1.500 1.500h10.500v10.500h-10.500z" fill="#008080" stroke="#000"/></svg></button>
                <button class="tool" aria-label="3-D"><svg class="icon" viewBox="0 0 16 16"><path d="M1 5l4-5h11v10l-5 6z" fill="#bbb" stroke="#666" stroke-width=".8"/><path d="M1 5l4-5h11l-4 5z" fill="#eee" stroke="#333" stroke-width=".5"/><path d="M.5 5h11v10.500H.5z" fill="#008080"/><path d="M.5 5v10.500h11" fill="none" stroke="#000"/></svg></button>
            </div>
        </div>

        <footer class="statusbar">
            <span class="status">Ready</span>
            <span class="panel"></span>
            <span class="panel message"></span>
            <span class="panel narrow"></span>
            <span class="panel"></span>
            <span class="panel narrow"></span>
            <span class="panel"></span>
            <span class="panel narrow"></span>
            <span class="panel last"></span>
        </footer>
    </body>
</html>
```
FILE: styles.css
```css
:root {
    --face: #bfbdbf;
    --light: #f4f2f4;
    --dark: #858385;
    --black: #2c2a2c;
    --grid: #c8c5c8;
    --ui: "DejaVu Sans Condensed", "DejaVu Sans", Tahoma, sans-serif;
    --sans: "Liberation Sans", Arial, sans-serif;
    --serif: "Liberation Serif", "Times New Roman", serif;
}

* {
    box-sizing: border-box;
}

body {
    display: flex;
    flex-direction: column;
    height: 100vh;
    margin: 0;
    overflow: hidden;
    background-color: var(--face);
    color: #111;
    font-family: var(--ui);
    font-size: 27px;
}

button, input, select {
    margin: 0;
    padding: 0;
    border: 0;
    border-radius: 0;
    outline: 0;
    background: none;
    color: inherit;
    font: inherit;
}

svg {
    display: block;
    flex: none;
    overflow: visible;
}

u {
    text-decoration-thickness: 3px;
    text-underline-offset: 4px;
}

.svg-serif {
    font-family: var(--serif);
    font-weight: bold;
}

.svg-sans {
    font-family: var(--sans);
    font-weight: bold;
}

.svg-digits {
    font-family: var(--ui);
    font-size: 8px;
}

.svg-mono {
    font-family: var(--ui);
    font-size: 7px;
}

/* title bar */
.titlebar {
    display: flex;
    flex: none;
    height: 48px;
    padding-right: 6px;
    background-color: #00007f;
    color: #fff;
}

.app-icon {
    width: 40px;
    height: 34px;
    margin: 8px 6px 0 5px;
}

.title {
    flex: 1;
    margin: 0;
    font-family: var(--sans);
    font-size: 31px;
    line-height: 47px;
}

.shortcuts {
    display: flex;
    margin-right: 27px;
    background-color: #000;
}

.flag {
    width: 36px;
    margin-right: 10px;
    border-right: 3px solid #000;
    background-color: #777577;
    box-shadow: 5px 0 var(--light);
}

.flag svg {
    width: 28px;
    height: 26px;
    margin-bottom: 22px;
}

.shortcut {
    display: flex;
    justify-content: center;
    width: 56px;
    margin-right: 2px;
    border: solid var(--light);
    border-width: 0 2px 2px 3px;
    border-right-color: var(--black);
    border-bottom-color: var(--dark);
    background-color: var(--face);
}

.gap {
    width: 22px;
}

.icon {
    width: 41px;
    height: 41px;
}

.window-buttons {
    display: flex;
    align-items: flex-start;
    margin-top: 5px;
}

.win-btn {
    display: flex;
    align-items: center;
    justify-content: center;
    width: 41px;
    height: 37px;
    border: 3px solid;
    border-color: var(--light) var(--black) var(--black) var(--light);
    background-color: var(--face);
}

.win-btn svg {
    width: 32px;
    height: 28px;
}

.win-btn.close {
    margin-left: 5px;
}

/* menus */
.menubar {
    display: flex;
    flex: none;
    align-items: center;
    height: 64px;
    padding-right: 6px;
    border-top: 5px solid var(--light);
    border-bottom: 2px solid var(--dark);
}

.menubar .window-buttons {
    align-self: center;
    margin: 0 0 4px auto;
}

.doc-icon {
    width: 42px;
    height: 42px;
    margin: 0 0 6px 3px;
}

.menu {
    padding: 2px 14px 0 13px;
    line-height: 48px;
}

/* toolbars */
.toolbar {
    display: flex;
    flex: none;
    align-self: flex-start;
    align-items: center;
    height: 70px;
    border: solid var(--light);
    border-width: 3px 2px 2px 0;
    border-right-color: var(--dark);
    border-bottom-color: var(--dark);
}

.grip {
    display: flex;
    flex: none;
    gap: 2px;
    align-self: stretch;
    width: 16px;
    margin: 3px 0 4px 8px;
}

.grip::before, .grip::after {
    content: "";
    width: 7px;
    border-left: 3px solid var(--light);
    border-right: 2px solid var(--dark);
}

.sep {
    flex: none;
    align-self: stretch;
    width: 16px;
    margin: 3px 0 4px;
    border: solid transparent;
    border-width: 0 5px;
    background: linear-gradient(to right, var(--dark) 3px, var(--light) 3px) padding-box;
}

.tool {
    display: flex;
    flex: none;
    align-items: center;
    justify-content: center;
    width: 59px;
    height: 59px;
    padding-bottom: 3px;
}

.pressed {
    border: 2px solid;
    border-color: var(--dark) var(--light) var(--light) var(--dark);
    background: repeating-conic-gradient(#fff 0 25%, #d8d6d8 0 50%) 0 0 / 6px 6px;
}

.drop {
    display: flex;
    flex: none;
    align-items: center;
    justify-content: center;
    width: 26px;
    height: 59px;
}

.drop.wide {
    width: 28px;
}

.drop svg, .text-tool svg {
    width: 14px;
    height: 9px;
}

.combo {
    display: flex;
    flex: none;
    align-items: center;
    height: 41px;
    margin-bottom: 2px;
    background-color: #fff;
}

.combo select {
    flex: 1;
    height: 41px;
    padding-left: 5px;
    appearance: none;
}

.combo svg {
    box-sizing: border-box;
    width: 24px;
    height: 37px;
    margin-right: 2px;
    padding: 0 6px;
    background-color: var(--face);
}

.zoom {
    width: 123px;
    margin-right: 6px;
    margin-left: 5px;
}

.formatting {
    height: 68px;
}

.formatting .sep {
    width: 14px;
    border-width: 0 4px;
}

.font {
    width: 333px;
    margin-right: 11px;
    margin-left: 6px;
}

.size {
    width: 91px;
    margin-right: 8px;
}

.letter {
    padding-right: 5px;
    font-family: var(--serif);
    font-size: 36px;
    font-weight: bold;
}

.percent {
    padding-right: 0;
    font-size: 33px;
}

/* formula bar */
.formula-bar {
    display: flex;
    flex: none;
    height: 52px;
    padding: 1px 0 3px 3px;
    border-bottom: 3px solid #111;
}

.name-box {
    width: 277px;
    background-color: #fff;
    text-align: center;
}

.name-drop {
    display: flex;
    align-items: center;
    justify-content: center;
    width: 40px;
    border: 3px solid;
    border-color: var(--light) var(--black) var(--black) var(--light);
}

.name-drop svg {
    width: 18px;
    height: 13px;
}

.formula-tools {
    display: flex;
    justify-content: flex-end;
    width: 147px;
    border-left: 4px solid var(--light);
    border-right: 2px solid var(--dark);
}

.equals {
    width: 40px;
    font-size: 31px;
    font-weight: bold;
}

.formula {
    flex: 1;
    background-color: #fff;
}

/* worksheet */
.workbook {
    display: flex;
    flex: 1;
    min-height: 0;
    border-left: 5px solid #4c4a4c;
    border-right: 4px solid var(--light);
}

.sheet {
    flex: 1;
    min-width: 0;
    overflow: hidden;
    background-color: #fff;
}

table {
    width: 2029px;
    height: calc(100% + 33px);
    border-collapse: separate;
    border-spacing: 0;
    table-layout: fixed;
    font-family: var(--sans);
    font-size: 33px;
    line-height: 38px;
}

.col-head {
    width: 66px;
}

.col-a {
    width: 192px;
}

.col-c {
    width: 460px;
}

tr {
    height: 45px;
}

th, td {
    padding: 0;
    white-space: nowrap;
}

th {
    border: solid var(--light);
    border-width: 2px 2px 3px 3px;
    border-right-color: var(--dark);
    border-bottom-color: var(--dark);
    background-color: var(--face);
    font-weight: normal;
}

thead th {
    border-top-color: var(--face);
}

tbody th {
    padding-right: 3px;
    border-left-color: var(--face);
}

thead .current {
    border-top-color: var(--light);
    border-bottom-color: var(--black);
    font-weight: bold;
}

td {
    padding: 1px 5px 0 6px;
    border: solid var(--grid);
    border-width: 0 3px 3px 0;
    text-align: right;
}

.text, .label {
    text-align: left;
}

.label {
    font-weight: bold;
}

/* scroll bars */
.vscroll {
    display: flex;
    flex-direction: column;
    width: 39px;
}

.vscroll button, .hscroll button, .thumb, .split {
    display: flex;
    flex: none;
    align-items: center;
    justify-content: center;
    border: solid var(--light);
    border-width: 3px;
    border-right-color: var(--black);
    border-bottom-color: var(--black);
    background-color: var(--face);
}

.vscroll button {
    height: 43px;
    border-right-color: var(--dark);
}

.vscroll button:last-child {
    height: 38px;
}

.vscroll button svg {
    width: 18px;
    height: 11px;
}

.vscroll .split {
    height: 15px;
}

.vscroll .thumb {
    flex: 914;
    border-right-color: var(--dark);
}

.track {
    flex: 46;
    background: repeating-conic-gradient(#efedef 0 25%, #d2d0d2 0 50%) 0 0 / 6px 6px;
}

/* sheet tabs */
.tabbar {
    display: flex;
    flex: none;
    height: 47px;
    padding-left: 3px;
    border-bottom: 7px solid #e6e4e6;
}

.tab-nav {
    display: flex;
    border-top: 2px solid var(--dark);
}

.tab-nav button {
    display: flex;
    align-items: center;
    justify-content: center;
    width: 38px;
    border: solid var(--light);
    border-width: 2px 2px 2px 3px;
    border-right-color: var(--dark);
    border-bottom-color: var(--dark);
}

.tab-nav svg {
    width: 20px;
    height: 24px;
}

.edge {
    width: 22px;
    height: 40px;
}

.tab {
    padding: 0 16px;
    border-top: 3px solid #a19fa1;
    border-bottom: 2px solid var(--black);
}

.tab.active {
    padding: 0 4px;
    border-top-color: #fff;
    background-color: #fff;
    color: #000;
    font-size: 28px;
    font-weight: bold;
}

.tab-rest {
    flex: 1;
    border-top: 3px solid #a19fa1;
}

.hscroll {
    display: flex;
    width: 41%;
    padding-right: 41px;
}

.hscroll .split {
    width: 13px;
    border-width: 3px 4px 2px;
}

.hscroll button {
    width: 41px;
    padding-right: 4px;
}

.hscroll button, .hscroll .thumb {
    border-bottom: 2px solid var(--dark);
}

.hscroll button svg {
    width: 20px;
    height: 20px;
}

.hscroll .thumb {
    flex: 610;
}

.hscroll .track {
    flex: 80;
}

/* drawing toolbar */
.draw-dock {
    display: flex;
    flex: none;
    border-bottom: 2px solid var(--dark);
}

.drawing {
    height: 69px;
    border-bottom: 0;
}

.text-tool {
    display: flex;
    flex: none;
    align-items: center;
    white-space: pre;
}

.text-tool svg {
    margin-left: 5px;
}

.draw {
    width: 113px;
    padding-left: 12px;
}

.autoshapes {
    width: 196px;
    padding-left: 12px;
}

/* status bar */
.statusbar {
    display: flex;
    flex: none;
    gap: 5px;
    height: 56px;
    margin-bottom: 5px;
    padding-right: 12px;
    border: solid var(--light);
    border-width: 3px 0;
}

.status {
    flex: 1;
    margin-right: 12px;
    padding-left: 16px;
    border-right: 3px solid var(--dark);
    box-shadow: 2px 0 var(--light);
    font-family: var(--sans);
    font-size: 31px;
    line-height: 50px;
}

.panel {
    width: 87px;
    margin: 4px 0 6px;
    border: 3px solid;
    border-color: var(--dark) var(--light) var(--light) var(--dark);
}

.message {
    width: 332px;
}

.narrow {
    width: 75px;
}

.last {
    width: 60px;
}
```
